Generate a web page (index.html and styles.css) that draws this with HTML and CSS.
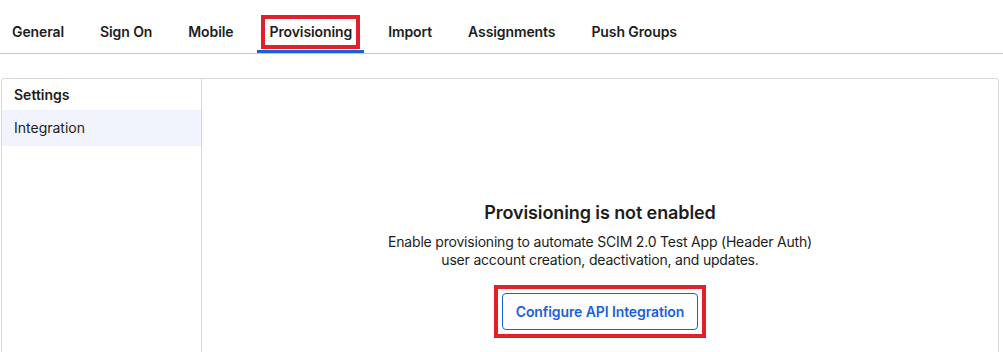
FILE: index.html
```html
<!DOCTYPE html>
<html>
<head>
    <meta charset="utf-8" />
    <title>Provisioning</title>
    <link rel="stylesheet" href="styles.css">
</head>
<body>
    <div class="tabs">
        <a class="tab">General</a>
        <a class="tab">Sign On</a>
        <a class="tab">Mobile</a>
        <a class="tab active"><span class="mark">Provisioning</span></a>
        <a class="tab">Import</a>
        <a class="tab">Assignments</a>
        <a class="tab">Push Groups</a>
    </div>

    <div class="panel">
        <div class="side">
            <h4>Settings</h4>
            <div class="side-item selected">Integration</div>
        </div>
        <div class="main">
            <h2>Provisioning is not enabled</h2>
            <p>Enable provisioning to automate SCIM 2.0 Test App (Header Auth)<br>user account creation, deactivation, and updates.</p>
            <span class="mark btn-wrap"><button class="btn">Configure API Integration</button></span>
        </div>
    </div>
</body>
</html>
```

FILE: styles.css
```css
* {
    margin: 0;
    padding: 0;
    box-sizing: border-box;
}

html, body {
    width: 100%;
    height: 100%;
}

body {
    font-family: Inter, "Noto Sans", sans-serif;
    font-size: 14px;
    color: #1d1d21;
    background: #fff;
    overflow: hidden;
}

.tabs {
    display: flex;
    gap: 12px;
    height: 54px;
    padding-top: 19px;
    border-bottom: 1px solid #c9c9cc;
}

.tab {
    padding: 0 12px;
    height: 34px;
    line-height: 26px;
    font-weight: 600;
    font-size: 14px;
    letter-spacing: -0.1px;
    color: #1d1d21;
    border-bottom: 3px solid transparent;
}

    .tab.active {
        border-bottom-color: #1662dd;
    }

.mark {
    outline: 4px solid #e3202a;
    outline-offset: 4px;
}

.tab .mark {
    display: inline-block;
    line-height: 18px;
}

.panel {
    display: flex;
    margin: 24px 4px 0 1px;
    height: 290px;
    border: 1px solid #d7d7dc;
    border-radius: 3px;
}

.side {
    width: 200px;
    border-right: 1px solid #d7d7dc;
}

    .side h4 {
        font-size: 14px;
        font-weight: 600;
        line-height: 18px;
        padding: 7px 12px 6px;
    }

.side-item {
    height: 36px;
    line-height: 36px;
    padding-left: 12px;
    font-size: 14px;
}

    .side-item.selected {
        background: #f2f4fd;
    }

.main {
    flex: 1;
    text-align: center;
    padding-top: 122px;
}

    .main h2 {
        font-size: 18px;
        font-weight: 600;
        line-height: 24px;
        letter-spacing: -0.1px;
    }

    .main p {
        margin-top: 8px;
        font-size: 14px;
        line-height: 18px;
        letter-spacing: -0.2px;
    }

.btn-wrap {
    display: inline-block;
    margin-top: 24px;
    line-height: 0;
}

.btn {
    height: 37px;
    padding: 0 13px;
    font-family: inherit;
    font-size: 14px;
    font-weight: 600;
    letter-spacing: -0.1px;
    color: #1662dd;
    background: #fff;
    border: 1px solid #1662dd;
    border-radius: 4px;
}
```
